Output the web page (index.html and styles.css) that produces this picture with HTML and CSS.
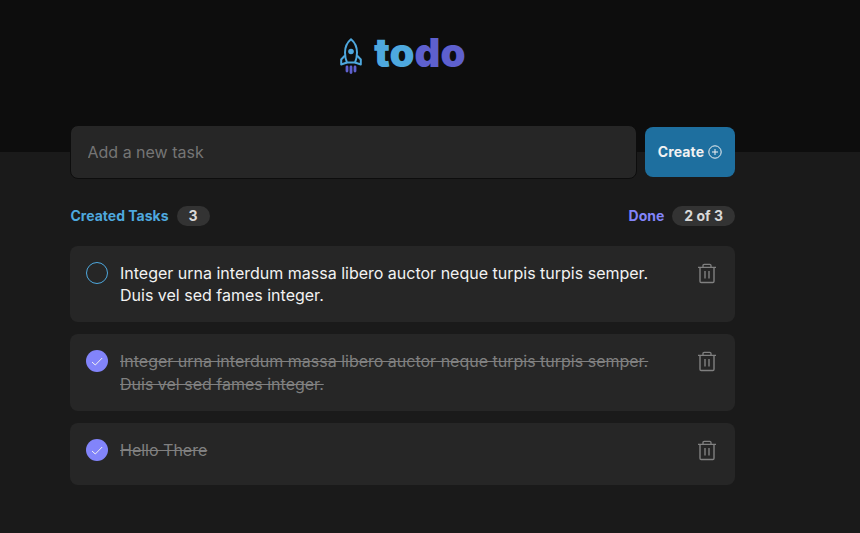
FILE: index.html
```html
<!DOCTYPE html>
<html lang="en">
<head>
<meta charset="utf-8">
<title>todo</title>
<link rel="stylesheet" href="styles.css">
</head>
<body>
<svg class="sprite" aria-hidden="true">
  <symbol id="trash" viewBox="0 0 20 22">
    <g fill="none" stroke="currentColor">
      <path d="M1 5.300h18M6 4.800V3.600Q6 2.300 7.300 2.300h5.400Q14 2.300 14 3.600v1.200" stroke-width="1.3"/>
      <path d="M3 5.300v14q0 1.200 1.200 1.200h11.600q1.200 0 1.200-1.200v-14" stroke-width="1.4"/>
      <path d="M8 9v7.500M12 9v7.500" stroke-width="1.400"/>
    </g>
  </symbol>
  <symbol id="check" viewBox="0 0 22 22">
    <path d="M6 12l3.300 3L16.200 8" fill="none" stroke="currentColor" stroke-width="1"/>
  </symbol>
</svg>
<header class="header">
  <svg class="rocket" viewBox="0 0 22 36" width="22" height="36">
    <g fill="none" stroke="#4ea8de" stroke-width="2" stroke-linejoin="round">
      <path d="M11 1.200C7 4.500 5 9.500 5 14.500c0 4 .8 7.300 2 10h8c1.200-2.700 2-6 2-10C17 9.500 15 4.500 11 1.200z"/>
      <path d="M5 17.500L1.200 21.500V26.500L7 24.500M17 17.500l3.800 4v5L15 24.500"/>
    </g>
    <circle cx="11" cy="13.500" r="2.800" fill="#4ea8de"/>
    <path d="M7 29v4M11 29v5.500M15 29v4" stroke="#5e60ce" stroke-width="2.800" stroke-linecap="round"/>
  </svg>
  <h1 class="logo">to<span>do</span></h1>
</header>
<main class="container">
  <form class="form">
    <input class="field" placeholder="Add a new task" aria-label="New task">
    <button class="create" type="button">Create
      <svg width="14" height="14" viewBox="0 0 14 14" fill="none" stroke="currentColor"><circle cx="7" cy="7" r="6.200"/><path d="M4 7h6M7 4v6"/></svg>
    </button>
  </form>
  <div class="summary">
    <p class="created">Created Tasks <span class="badge">3</span></p>
    <p class="done">Done <span class="badge">2 of 3</span></p>
  </div>
  <ul class="tasks">
    <li class="task">
      <span class="mark"></span>
      <p>Integer urna interdum massa libero auctor neque turpis turpis semper. Duis vel sed fames integer.</p>
      <svg class="trash"><use href="#trash"/></svg>
    </li>
    <li class="task checked">
      <span class="mark"><svg><use href="#check"/></svg></span>
      <p>Integer urna interdum massa libero auctor neque turpis turpis semper. Duis vel sed fames integer.</p>
      <svg class="trash"><use href="#trash"/></svg>
    </li>
    <li class="task checked">
      <span class="mark"><svg><use href="#check"/></svg></span>
      <p>Hello There</p>
      <svg class="trash"><use href="#trash"/></svg>
    </li>
  </ul>
</main>
</body>
</html>
```
FILE: styles.css
```css
* { box-sizing: border-box; margin: 0; padding: 0; }
body {
  background: #1a1a1a;
  font-family: Inter, sans-serif;
  font-size: 16px;
  min-height: 533px;
  overflow: hidden;
}
.sprite { display: none; }
.header {
  height: 152px;
  background: #0d0d0d;
  display: flex;
  align-items: flex-start;
  padding: 38px 0 0 340px;
  gap: 12px;
}
.logo {
  font-size: 40px;
  line-height: 48px;
  font-weight: 900;
  letter-spacing: 0;
  color: #4ea8de;
  margin-top: -9px;
}
.logo span { color: #5e60ce; }
.container { width: 665px; margin: -27px 0 0 70px; }
.form { display: flex; gap: 8px; align-items: center; }
.field {
  flex: 1;
  min-width: 0;
  height: 54px;
  padding: 0 17px 0 16.5px;
  border: 1px solid #0d0d0d;
  border-radius: 8px;
  background: #262626;
  color: #f2f2f2;
  font: 16px Inter, sans-serif;
}
.field::placeholder { color: #757575; }
.create {
  width: 90px;
  height: 50px;
  padding-bottom: 1px;
  display: flex;
  align-items: center;
  justify-content: center;
  gap: 4px;
  border: 0;
  border-radius: 8px;
  background: #1e6f9f;
  color: #f2f2f2;
  font: 700 14px Inter, sans-serif;
  letter-spacing: 0.1px;
}
.summary {
  display: flex;
  justify-content: space-between;
  margin-top: 27px;
  padding-left: 0.5px;
  font-size: 14px;
  font-weight: 700;
}
.summary p { display: flex; align-items: center; gap: 8px; height: 20px; line-height: 20px; }
.created { color: #4ea8de; }
.done { color: #8284fa; }
.badge {
  height: 20px;
  line-height: 20px;
  padding: 0 12px;
  border-radius: 10px;
  background: #333;
  color: #d9d9d9;
}
.tasks { list-style: none; display: grid; gap: 12px; margin-top: 19.6px; }
.task {
  display: flex;
  align-items: flex-start;
  padding: 16px;
  min-height: 62px;
  border-radius: 8px;
  background: #262626;
  color: #f2f2f2;
  line-height: 22.4px;
}
.task p { width: 540px; margin-left: 12px; }
.mark { width: 22px; height: 22px; border: 1px solid #4ea8de; border-radius: 50%; flex: none; }
.mark svg { display: block; width: 22px; height: 22px; }
.checked { color: #808080; }
.checked p { text-decoration: line-through; }
.checked .mark { border: 0; background: #8284fa; color: #f2f2f2; }
.trash { width: 20px; height: 22px; margin-left: auto; margin-right: 2px; color: #808080; flex: none; }
```
